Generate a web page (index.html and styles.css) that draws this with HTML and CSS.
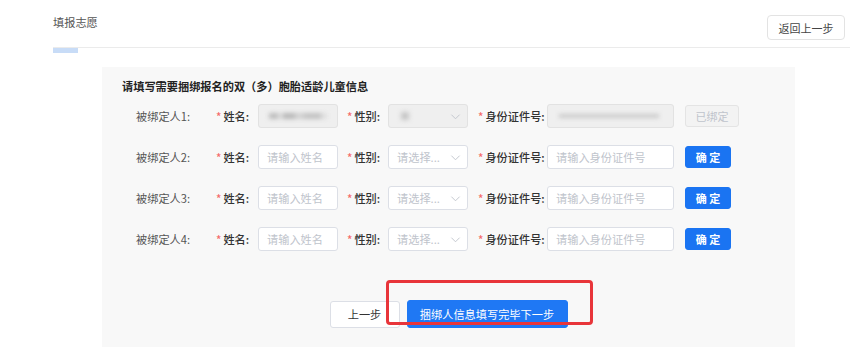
FILE: index.html
```html
<!DOCTYPE html>
<html lang="zh-CN">
<head>
    <meta charset="UTF-8">
    <title>填报志愿</title>
    <link rel="stylesheet" href="styles.css">
</head>
<body>
    <div class="page">
        <div class="page-header">
            <span class="page-title">填报志愿</span>
            <button class="back-btn">返回上一步</button>
        </div>
        <div class="tabs">
            <div class="tab-bar"></div>
        </div>

        <div class="panel">
            <div class="panel-title">请填写需要捆绑报名的双（多）胞胎适龄儿童信息</div>

            <div class="bind-row">
                <span class="row-label">被绑定人1:</span>
                <span class="field-label w-name"><i>*</i>姓名:</span>
                <div class="input input-name is-disabled"><span class="blur blur-name"></span></div>
                <span class="field-label w-sex"><i>*</i>性别:</span>
                <div class="input input-sex is-disabled">
                    <span class="blur blur-sex"></span>
                    <svg class="arrow" viewBox="0 0 12 12"><path d="M1.5 4 L6 8.5 L10.5 4" fill="none" stroke="currentColor" stroke-width="1"/></svg>
                </div>
                <span class="field-label w-id"><i>*</i>身份证件号:</span>
                <div class="input input-id is-disabled"><span class="blur blur-id"></span></div>
                <button class="btn btn-disabled">已绑定</button>
            </div>

            <div class="bind-row">
                <span class="row-label">被绑定人2:</span>
                <span class="field-label w-name"><i>*</i>姓名:</span>
                <div class="input input-name"><span class="ph">请输入姓名</span></div>
                <span class="field-label w-sex"><i>*</i>性别:</span>
                <div class="input input-sex">
                    <span class="ph">请选择...</span>
                    <svg class="arrow" viewBox="0 0 12 12"><path d="M1.5 4 L6 8.5 L10.5 4" fill="none" stroke="currentColor" stroke-width="1"/></svg>
                </div>
                <span class="field-label w-id"><i>*</i>身份证件号:</span>
                <div class="input input-id"><span class="ph">请输入身份证件号</span></div>
                <button class="btn btn-primary">确 定</button>
            </div>

            <div class="bind-row">
                <span class="row-label">被绑定人3:</span>
                <span class="field-label w-name"><i>*</i>姓名:</span>
                <div class="input input-name"><span class="ph">请输入姓名</span></div>
                <span class="field-label w-sex"><i>*</i>性别:</span>
                <div class="input input-sex">
                    <span class="ph">请选择...</span>
                    <svg class="arrow" viewBox="0 0 12 12"><path d="M1.5 4 L6 8.5 L10.5 4" fill="none" stroke="currentColor" stroke-width="1"/></svg>
                </div>
                <span class="field-label w-id"><i>*</i>身份证件号:</span>
                <div class="input input-id"><span class="ph">请输入身份证件号</span></div>
                <button class="btn btn-primary">确 定</button>
            </div>

            <div class="bind-row">
                <span class="row-label">被绑定人4:</span>
                <span class="field-label w-name"><i>*</i>姓名:</span>
                <div class="input input-name"><span class="ph">请输入姓名</span></div>
                <span class="field-label w-sex"><i>*</i>性别:</span>
                <div class="input input-sex">
                    <span class="ph">请选择...</span>
                    <svg class="arrow" viewBox="0 0 12 12"><path d="M1.5 4 L6 8.5 L10.5 4" fill="none" stroke="currentColor" stroke-width="1"/></svg>
                </div>
                <span class="field-label w-id"><i>*</i>身份证件号:</span>
                <div class="input input-id"><span class="ph">请输入身份证件号</span></div>
                <button class="btn btn-primary">确 定</button>
            </div>

            <div class="footer-btns">
                <button class="btn-prev">上一步</button>
                <div class="next-wrap">
                    <button class="btn-next">捆绑人信息填写完毕下一步</button>
                    <div class="highlight-box"></div>
                </div>
            </div>
        </div>
    </div>
</body>
</html>
```

FILE: styles.css
```css
body {
    margin: 0;
    padding: 0;
    background-color: #fff;
    font-family: 'Noto Sans CJK SC', 'Noto Sans', sans-serif;
    font-size: 11.2px;
    color: #303133;
}

button {
    font-family: inherit;
    cursor: pointer;
}

.page {
    width: 797px;
    margin-left: 53px;
}

.page-header {
    display: flex;
    justify-content: space-between;
    align-items: flex-start;
    height: 47px;
}

.page-title {
    font-size: 11.2px;
    color: #555;
    margin-top: 14px;
}

.back-btn {
    width: 78px;
    height: 25px;
    margin-top: 15px;
    margin-right: 5px;
    padding: 0;
    font-size: 11px;
    color: #444;
    background-color: #fff;
    border: 1px solid #e3e3e3;
    border-radius: 4px;
}

.tabs {
    border-top: 1px solid #ebebeb;
    height: 19px;
}

.tab-bar {
    width: 25px;
    height: 5px;
    background-color: #c8dcf7;
}

.panel {
    margin-left: 49px;
    width: 693px;
    height: 280px;
    background-color: #f8f8f8;
    padding: 12px 0 0 20px;
    box-sizing: border-box;
}

.panel-title {
    font-weight: bold;
    color: #222;
    line-height: 14px;
    margin-bottom: 11px;
}

.bind-row {
    display: flex;
    align-items: center;
    height: 24px;
    margin-bottom: 17px;
    padding-left: 14px;
}

.row-label {
    width: 78px;
    color: #555;
}

.field-label {
    color: #333;
    font-weight: 500;
    white-space: nowrap;
}

.field-label i {
    font-style: normal;
    color: #f56c6c;
    margin: 0 2px 0 2px;
}

.w-name {
    width: 44px;
}

.w-sex {
    width: 43px;
    margin-left: 7px;
}

.w-id {
    width: 71px;
    margin-left: 8px;
}

.input {
    height: 24px;
    box-sizing: border-box;
    border: 1px solid #dcdfe6;
    border-radius: 3px;
    background-color: #fff;
    display: flex;
    align-items: center;
    padding-left: 8px;
    position: relative;
}

.input.is-disabled {
    background-color: #efefef;
    border-color: #e2e2e2;
}

.input-name {
    width: 80px;
}

.input-sex {
    width: 80px;
}

.input-id {
    width: 127px;
}

.ph {
    color: #c0c4cc;
    white-space: nowrap;
}

.arrow {
    position: absolute;
    right: 6px;
    top: 6px;
    width: 11px;
    height: 11px;
    color: #c0c4cc;
}

.blur {
    display: inline-block;
    height: 6px;
    background-color: #b9b9b9;
    filter: blur(2px);
}

.blur-name {
    width: 58px;
    margin-left: 2px;
    background: linear-gradient(90deg, #bdbdbd 0 15%, #dadada 15% 25%, #b8b8b8 25% 45%, #d0d0d0 45% 60%, #c2c2c2 60% 90%, #dedede 90%);
}

.blur-sex {
    width: 8px;
    height: 8px;
    margin-left: 4px;
    background-color: #c8c8c8;
}

.blur-id {
    width: 100px;
    height: 4px;
    margin-left: 3px;
    background-color: #cacaca;
}

.btn {
    height: 22px;
    margin-left: 11px;
    padding: 0;
    font-size: 11px;
    border-radius: 3px;
}

.btn-disabled {
    width: 54px;
    color: #c0c4cc;
    background-color: #f3f3f3;
    border: 1px solid #e4e4e4;
    cursor: not-allowed;
}

.btn-primary {
    width: 46px;
    color: #fff;
    font-weight: bold;
    background-color: #1a74f2;
    border: 1px solid #1a74f2;
}

.footer-btns {
    display: flex;
    justify-content: center;
    align-items: center;
    gap: 7px;
    margin-top: 49px;
    margin-left: -20px;
}

.btn-prev {
    width: 70px;
    height: 27px;
    padding: 0;
    font-size: 11.2px;
    color: #333;
    background-color: #fff;
    border: 1px solid #dcdfe6;
    border-radius: 3px;
}

.next-wrap {
    position: relative;
}

.btn-next {
    display: block;
    width: 161px;
    height: 28px;
    padding: 0;
    font-size: 11.2px;
    color: #fff;
    background-color: #1f78f4;
    border: 1px solid #1f78f4;
    border-radius: 3px;
}

.highlight-box {
    position: absolute;
    left: -21px;
    top: -20px;
    width: 207px;
    height: 45px;
    box-sizing: border-box;
    border: 3px solid #e8353a;
    border-radius: 4px;
}
```
